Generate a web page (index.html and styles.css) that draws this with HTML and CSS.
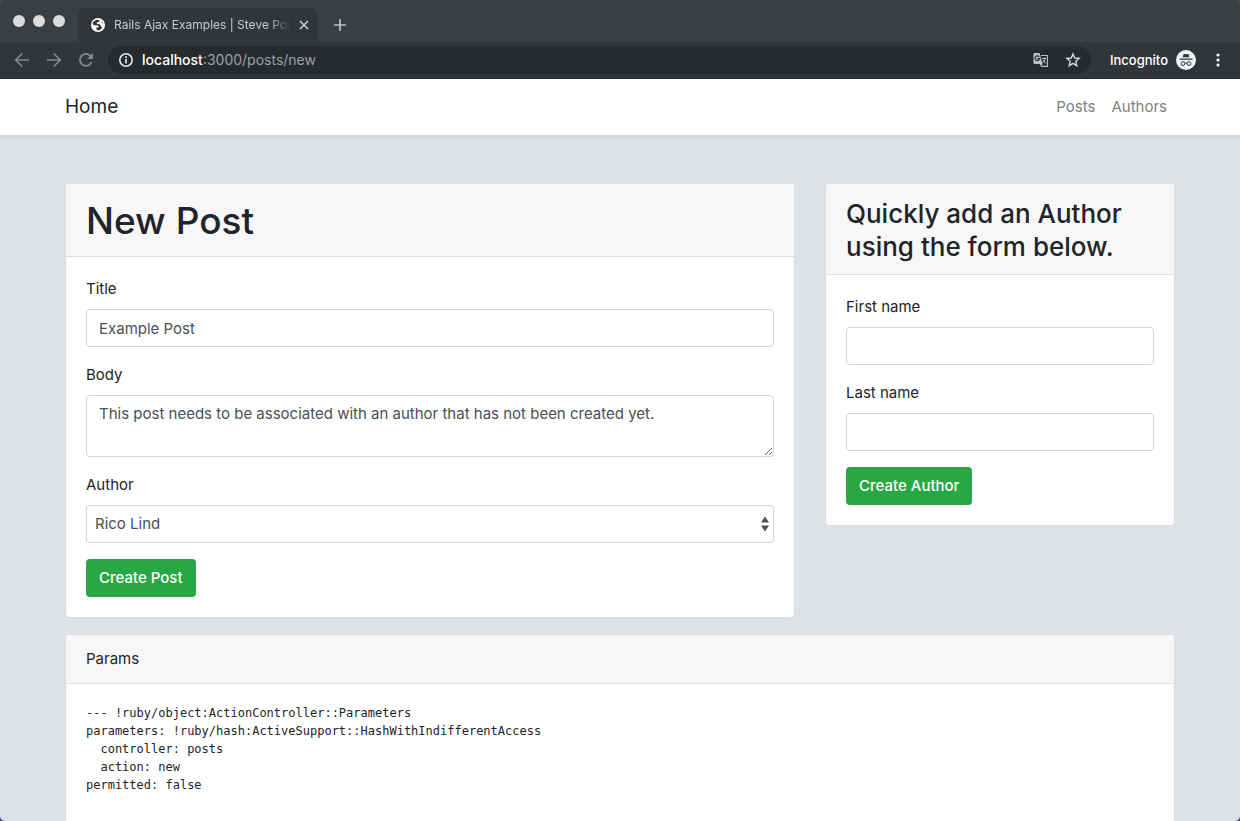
FILE: index.html
```html
<!DOCTYPE html>
<html lang="en">
<head>
<meta charset="utf-8">
<title>Rails Ajax Examples</title>
<link rel="stylesheet" href="styles.css">
</head>
<body>
<div class="window">
  <header class="chrome">
    <div class="tabstrip">
      <div class="lights"><span class="light"></span><span class="light"></span><span class="light"></span></div>
      <div class="tab">
        <svg class="favicon" viewBox="0 0 14 14" width="14" height="14" aria-hidden="true"><circle cx="7" cy="7" r="7" fill="#fff"/><path d="M1.500 5.500 Q2 7.300 4 7.300 L7 7.600 Q8.500 8.500 7 9.600 L5.200 9.400 Q5 11.500 6.500 12.600 Q9 12.600 10.600 10.800 Q11.300 9 9.900 7.900 L8.500 6.200 L5.800 5.800 Q5.200 4.600 6.600 4.300 L8.600 3.600 Q8.800 2.400 7.300 1.700 Q3 1.500 1.500 5.500Z M10 3.200 Q11 5 12.600 5.800 Q12.200 4 10 3.200Z" fill="#35363a"/></svg>
        <span class="tab-title">Rails Ajax Examples | Steve Pol</span>
        <button class="icon-btn" aria-label="Close tab"><svg viewBox="0 0 10 10" width="10" height="10"><path d="M1 1 9 9M9 1 1 9" stroke="#d3d5d8" stroke-width="1.500" fill="none"/></svg></button>
      </div>
      <button class="icon-btn new-tab" aria-label="New tab"><svg viewBox="0 0 12 12" width="12" height="12"><path d="M6 0V12M0 6H12" stroke="#bdc1c6" stroke-width="1.700" fill="none"/></svg></button>
    </div>
    <div class="toolbar">
      <button class="icon-btn" aria-label="Back"><svg viewBox="0 0 16 16" width="16" height="16"><path d="M15 8H2M8.200 1.500 1.700 8 8.200 14.500" stroke="#85888c" stroke-width="1.700" fill="none"/></svg></button>
      <button class="icon-btn" aria-label="Forward"><svg viewBox="0 0 16 16" width="16" height="16"><path d="M1 8H14M7.800 1.500 14.300 8 7.800 14.500" stroke="#85888c" stroke-width="1.700" fill="none"/></svg></button>
      <button class="icon-btn" aria-label="Reload"><svg viewBox="0 0 16 16" width="16" height="16"><path d="M13.600 10A6 6 0 1 1 12.400 3.800" stroke="#85888c" stroke-width="1.800" fill="none"/><path d="M15 1V7H9Z" fill="#85888c"/></svg></button>
      <div class="omnibox">
        <svg viewBox="0 0 16 16" width="16" height="16" aria-hidden="true"><circle cx="8" cy="8" r="6.200" stroke="#e8eaed" stroke-width="1.600" fill="none"/><path d="M8 7V11.500M8 4.300V5.900" stroke="#e8eaed" stroke-width="1.700"/></svg>
        <span class="url"><b>localhost</b>:3000/posts/new</span>
        <button class="icon-btn" aria-label="Translate"><svg viewBox="0 0 16 16" width="16" height="16"><path d="M8 3.500H14.400V14.400H8.500" stroke="#bdc1c6" stroke-width="1.100" fill="none"/><path d="M1.500 1H6.500L9.500 12H1.500Q.5 12 .5 11V2Q.5 1 1.500 1Z" fill="#bdc1c6"/><path d="M6.500 12H9.500L8 14.500Z" fill="#bdc1c6"/><path d="M6.300 4.900A2.300 2.300 0 1 0 6.600 6.700H4.500" stroke="#292a2d" stroke-width="1.200" fill="none"/><path d="M8.800 6.500H13.400M11.100 5.500V6.500M12.400 6.500Q11.700 9.500 9.400 10.800M9.900 8 12.900 11.500" stroke="#bdc1c6" fill="none"/></svg></button>
        <button class="icon-btn" aria-label="Bookmark"><svg viewBox="0 0 16 16" width="16" height="16"><path d="M8 1.900 9.700 6 14.200 6.400 10.800 9.300 11.800 13.700 8 11.400 4.200 13.700 5.200 9.300 1.800 6.400 6.300 6Z" stroke="#d5d7da" stroke-width="1.400" fill="none"/></svg></button>
      </div>
      <div class="profile">
        <span>Incognito</span>
        <svg viewBox="0 0 20 20" width="20" height="20" aria-hidden="true"><circle cx="10" cy="10" r="10" fill="#f1f3f4"/><path d="M6.600 7.200 7.500 4.200Q7.700 3.700 8.300 3.900L10 4.300 11.700 3.900Q12.300 3.700 12.500 4.200L13.400 7.200Z" fill="#323639"/><path d="M3.500 9.200H16.500" stroke="#323639" stroke-width="1.200"/><circle cx="7" cy="13.600" r="1.900" fill="none" stroke="#323639"/><circle cx="13" cy="13.600" r="1.900" fill="none" stroke="#323639"/><path d="M8.900 13.300Q10 12.700 11.100 13.300" stroke="#323639" fill="none"/></svg>
      </div>
      <button class="icon-btn" aria-label="Menu"><svg viewBox="0 0 4 14" width="4" height="14"><g fill="#fff"><circle cx="2" cy="2" r="1.600"/><circle cx="2" cy="7" r="1.600"/><circle cx="2" cy="12" r="1.600"/></g></svg></button>
    </div>
  </header>
  <div class="page">
    <nav class="navbar">
      <div class="container nav-row">
        <a class="brand" href="#">Home</a>
        <div class="nav-links"><a href="#">Posts</a><a href="#">Authors</a></div>
      </div>
    </nav>
    <main class="container content">
      <div class="columns">
        <section class="card">
          <div class="card-header"><h1>New Post</h1></div>
          <form class="card-body">
            <div class="field"><label for="title">Title</label><input class="control" id="title" type="text" value="Example Post"></div>
            <div class="field"><label for="body">Body</label><textarea class="control" id="body" rows="2">This post needs to be associated with an author that has not been created yet.</textarea></div>
            <div class="field"><label for="author">Author</label>
              <div class="select-wrap">
                <select class="control" id="author"><option>Rico Lind</option></select>
                <svg class="select-arrows" viewBox="0 0 8 16" width="8" height="16" aria-hidden="true"><path d="M4 0.500 8 6.500H0ZM0 9.500H8L4 15.500Z" fill="#495057"/></svg>
              </div>
            </div>
            <button class="btn" type="button">Create Post</button>
          </form>
        </section>
        <section class="card">
          <div class="card-header"><h2>Quickly add an Author using the form below.</h2></div>
          <form class="card-body">
            <div class="field"><label for="first">First name</label><input class="control" id="first" type="text"></div>
            <div class="field"><label for="last">Last name</label><input class="control" id="last" type="text"></div>
            <button class="btn" type="button">Create Author</button>
          </form>
        </section>
      </div>
      <section class="card">
        <div class="card-header">Params</div>
        <div class="card-body">
<pre class="params">--- !ruby/object:ActionController::Parameters
parameters: !ruby/hash:ActiveSupport::HashWithIndifferentAccess
  controller: posts
  action: new
permitted: false

</pre>
        </div>
      </section>
    </main>
  </div>
</div>
</body>
</html>
```

FILE: styles.css
```css
* { box-sizing: border-box; }
body {
  margin: 0;
  background: #42457c;
  color: #212529;
  font: 15px/24px Inter, "Liberation Sans", sans-serif;
}
a { color: inherit; text-decoration: none; }
h1, h2 { margin: 0; font-weight: 500; }
h1 { font-size: 37px; line-height: 48px; padding-top: 1px; margin-bottom: -1px; }
h2 { font-size: 26px; line-height: 33px; padding-top: 1px; margin-bottom: -1px; }
svg { display: block; flex: none; }

.window {
  display: flex;
  flex-direction: column;
  height: 100vh;
  overflow: hidden;
  border-radius: 5px;
  background: #dee2e6;
}

/* Browser chrome */
.chrome { flex: none; background: #35363a; color: #fff; border-bottom: 1px solid #27292c; }
.tabstrip { display: flex; height: 42px; background: #3c3f41; padding: 8px 13px 0; }
.lights { display: flex; gap: 8px; padding-top: 7px; margin-right: 13px; }
.light { width: 12px; height: 12px; border-radius: 50%; background: #dcdcdc; }
.tab {
  display: flex;
  align-items: center;
  gap: 9px;
  width: 240px;
  padding: 0 11px 0 13px;
  border-radius: 8px 8px 0 0;
  background: #323639;
}
.tab-title {
  flex: 1;
  white-space: nowrap;
  font: 12px/16px Inter, sans-serif;
  color: #c8cbcf;
  -webkit-mask-image: linear-gradient(90deg, #000 88%, transparent);
  mask-image: linear-gradient(90deg, #000 88%, transparent);
}
.icon-btn { display: flex; align-items: center; padding: 0; border: 0; background: none; }
.new-tab { margin-left: 16px; }
.toolbar { display: flex; align-items: center; gap: 16px; height: 36px; padding: 0 20px 0 14px; background: #323639; }
.omnibox {
  flex: 1;
  display: flex;
  align-items: center;
  gap: 16px;
  height: 28px;
  margin-left: -2px;
  padding: 0 10px;
  border-radius: 14px;
  background: #282b2e;
}
.url { flex: 1; margin-left: -8px; font-size: 14px; line-height: 20px; color: #9aa0a6; }
.url b { font-weight: 500; color: #fff; }
.profile { display: flex; align-items: center; gap: 8px; margin: 0 4px 0 3px; font-size: 13px; font-weight: 500; }

/* Page */
.page { flex: 1; overflow: auto; scrollbar-width: none; }
.container { width: 100%; max-width: 1140px; margin: 0 auto; padding: 0 15px; }
.navbar { background: #fff; box-shadow: 0 2px 4px rgba(0, 0, 0, 0.075); }
.nav-row { display: flex; align-items: center; justify-content: space-between; height: 56px; }
.brand { font-size: 19px; }
.nav-links { display: flex; gap: 16px; padding-right: 8px; color: #808080; }
.content { display: flex; flex-direction: column; gap: 16px; padding-top: 48px; }
.columns { display: grid; grid-template-columns: 73fr 35fr; gap: 30px; align-items: start; }
.card { border: 1px solid #d9dce0; border-radius: 4px; background: #fff; }
.card-header { padding: 12px 20px; border-bottom: 1px solid #dfdfdf; border-radius: 3px 3px 0 0; background: #f7f7f7; }
.card-body { padding: 20px; }

.field { display: flex; flex-direction: column; gap: 8px; margin-bottom: 16px; }
.control {
  display: block;
  width: 100%;
  height: 38px;
  padding: 6px 12px;
  border: 1px solid #ced4da;
  border-radius: 4px;
  background: #fff;
  color: #495057;
  font: inherit;
}
textarea.control { height: 62px; resize: vertical; }
.select-wrap { position: relative; }
select.control { appearance: none; padding: 6px 8px; }
.select-arrows { position: absolute; right: 5px; top: 11px; pointer-events: none; }
.btn {
  display: block;
  align-self: flex-start;
  height: 38px;
  padding: 0 13px;
  border: 0;
  border-radius: 4px;
  background: #28a745;
  color: #fff;
  font: inherit;
  font-weight: 500;
}
.params { margin: 0; font: 12px/18px "DejaVu Sans Mono", monospace; color: #212529; }
```
